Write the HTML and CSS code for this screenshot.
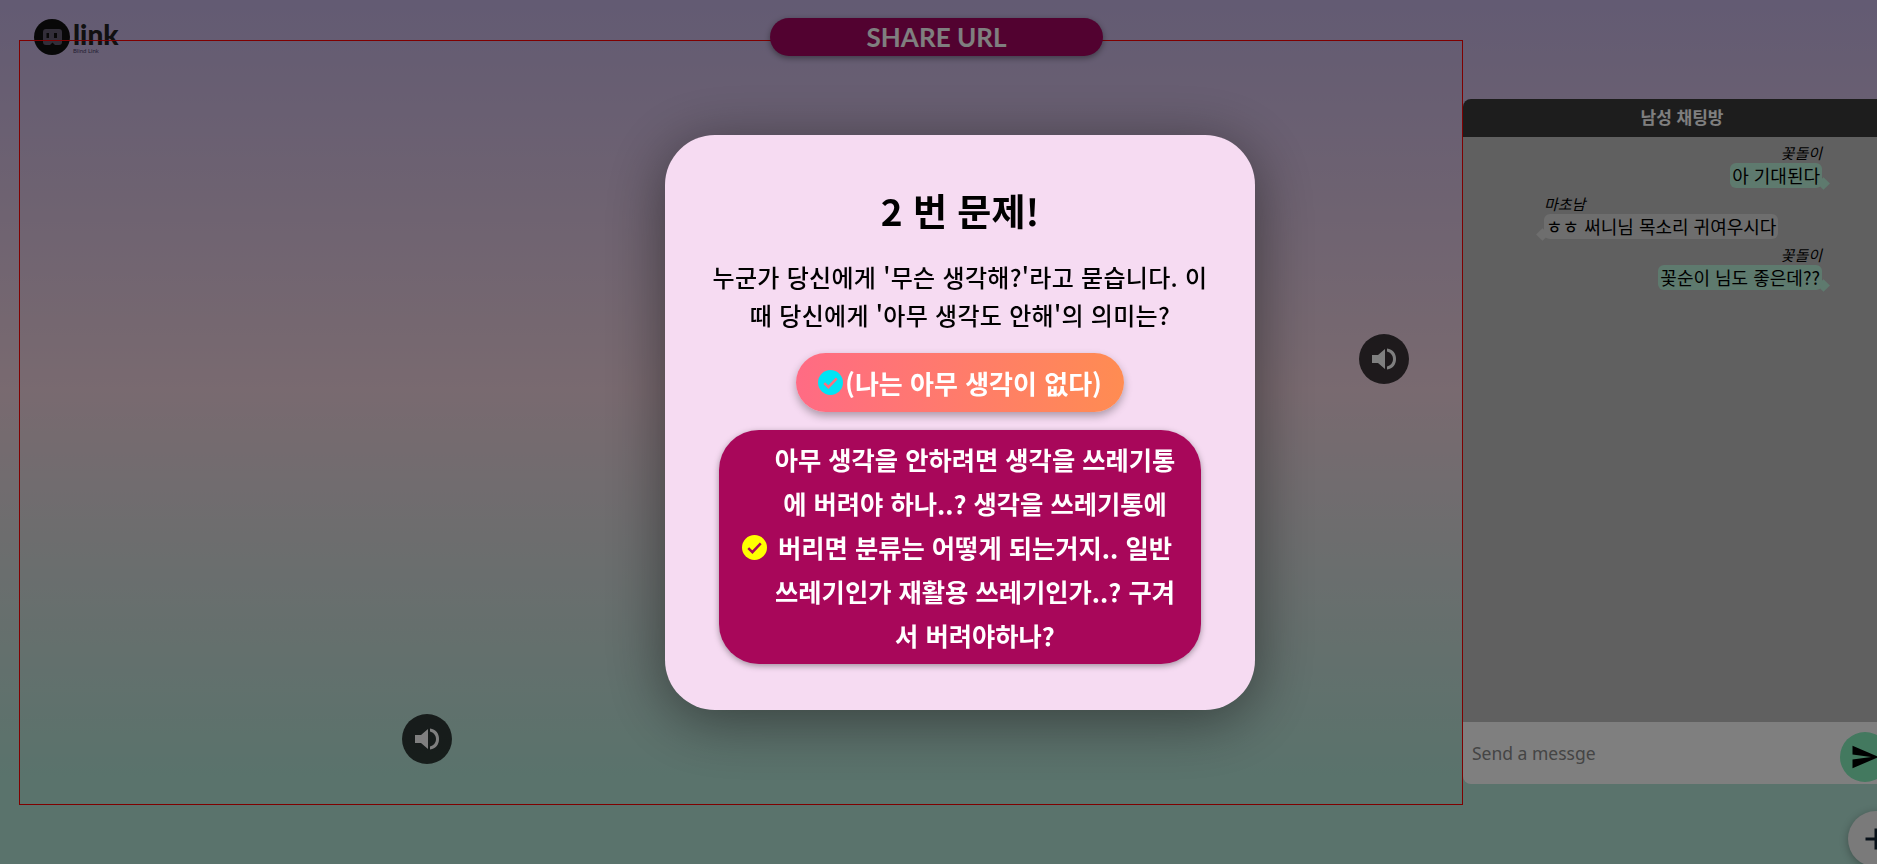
FILE: index.html
```html
<!DOCTYPE html>
<html lang="ko">
<head>
  <title>Blind Link</title>
  <meta charset="utf-8" />
  <link rel="stylesheet" href="styles.css">
</head>
<body>

<!--Logo-->
<div class="logo">
  <svg class="logo-mark" viewBox="0 0 36 36">
    <circle cx="18" cy="18" r="18" fill="#111"/>
    <path d="M12 10h13a3 3 0 0 1 3 3v10a3 3 0 0 1-3 3h-4l-2.500-2.500L16 26h-4a3 3 0 0 1-3-3V13a3 3 0 0 1 3-3z" fill="#645c73"/>
    <rect x="12.500" y="14" width="2.500" height="5" fill="#111"/>
    <rect x="20" y="14" width="3" height="5" fill="#111"/>
  </svg>
  <div class="logo-text">
    <span class="logo-name">link</span>
    <span class="logo-sub">Blind Link</span>
  </div>
</div>

<main class="stage">
  <!--Video area-->
  <section class="video">
    <div class="share-url">SHARE URL</div>
    <button class="speaker speaker-left">
      <svg viewBox="0 0 24 24"><path d="M0 8h6l7-6v20l-7-6H0z"/><path d="M15 1.500c6 1 9 5 9 10.500s-3 9.500-9 10.500v-3c3.500-1 6-3.500 6-7.500s-2.500-6.500-6-7.500z"/></svg>
    </button>
    <button class="speaker speaker-right">
      <svg viewBox="0 0 24 24"><path d="M0 8h6l7-6v20l-7-6H0z"/><path d="M15 1.500c6 1 9 5 9 10.500s-3 9.500-9 10.500v-3c3.500-1 6-3.500 6-7.500s-2.500-6.500-6-7.500z"/></svg>
    </button>
  </section>

  <!--Chat-->
  <aside class="chat">
    <header class="chat-head">남성 채팅방</header>
    <div class="chat-log">
      <div class="msg mine">
        <span class="who">꽃돌이</span>
        <span class="bubble">아 기대된다</span>
      </div>
      <div class="msg other">
        <span class="who">마초남</span>
        <span class="bubble">ㅎㅎ 써니님 목소리 귀여우시다</span>
      </div>
      <div class="msg mine">
        <span class="who">꽃돌이</span>
        <span class="bubble">꽃순이 님도 좋은데??</span>
      </div>
    </div>
    <form class="chat-input">
      <span class="hint">Send a messge</span>
      <button class="send" type="button">
        <svg viewBox="0 0 24 24"><path d="M2.010 21L23 12 2.010 3 2 10l15 2-15 2z"/></svg>
      </button>
    </form>
  </aside>
</main>

<button class="plus">
  <svg viewBox="0 0 24 24"><path d="M19 13h-6v6h-2v-6H5v-2h6V5h2v6h6z"/></svg>
</button>

<!--Quiz dialog-->
<div class="overlay">
  <div class="modal">
    <h1>2 번 문제!</h1>
    <p class="question">누군가 당신에게 '무슨 생각해?'라고 묻습니다. 이<br>때 당신에게 '아무 생각도 안해'의 의미는?</p>
    <div class="answer">
      <svg class="check" viewBox="0 0 24 24"><circle cx="12" cy="12" r="12" fill="#00e5f5"/><path d="M6 12.500l4 4 8-8.500" fill="none" stroke="#ff6f7d" stroke-width="2.400"/></svg>
      <span>(나는 아무 생각이 없다)</span>
    </div>
    <div class="answer-long">
      <svg class="check" viewBox="0 0 24 24"><circle cx="12" cy="12" r="12" fill="#ffff00"/><path d="M6 12.500l4 4 8-8.500" fill="none" stroke="#a8075a" stroke-width="2.400"/></svg>
      <p>아무 생각을 안하려면 생각을 쓰레기통<br>에 버려야 하나..? 생각을 쓰레기통에<br>버리면 분류는 어떻게 되는거지.. 일반<br>쓰레기인가 재활용 쓰레기인가..? 구겨<br>서 버려야하나?</p>
    </div>
  </div>
</div>

</body>
</html>
```

FILE: styles.css
```css
* {
  box-sizing: border-box;
}

html, body {
  height: 100%;
}

body {
  margin: 0;
  overflow: hidden;
  font-family: "Noto Sans CJK KR", "Noto Sans", sans-serif;
  background: linear-gradient(#c6b6e6 0%, #f2d4e0 45%, #b4e6d8 90%, #b4e6d8 100%);
}

button {
  border: 0;
  padding: 0;
  cursor: pointer;
}

h1, p {
  margin: 0;
}

.logo {
  position: absolute;
  top: 19px;
  left: 34px;
  display: flex;
  gap: 3px;
}
.logo-mark {
  width: 36px;
  height: 36px;
}
.logo-text {
  display: flex;
  flex-direction: column;
  font-family: "Lato", sans-serif;
  color: #222;
}
.logo-name {
  font-size: 28px;
  font-weight: 900;
  line-height: 27px;
  margin-top: 2px;
}
.logo-sub {
  font-size: 6px;
  line-height: 6px;
  color: #4a3f66;
}

.stage {
  display: flex;
  align-items: flex-start;
  height: 100%;
  padding: 40px 0 0 19px;
}

.video {
  position: relative;
  flex: none;
  width: 1444px;
  height: 765px;
  border: 1px solid #ff0000;
}

.share-url {
  position: absolute;
  top: -23px;
  left: 750px;
  width: 333px;
  height: 38px;
  border-radius: 19px;
  background: #a50460;
  color: #fff;
  font-family: "Lato", sans-serif;
  font-size: 26px;
  font-weight: 700;
  line-height: 38px;
  text-align: center;
  box-shadow: 0 2px 6px rgba(0,0,0,.4);
}

.speaker {
  position: absolute;
  width: 50px;
  height: 50px;
  border-radius: 50%;
  background: rgba(0,0,0,.75);
  display: flex;
  align-items: center;
  justify-content: center;
}
.speaker svg {
  width: 24px;
  height: 24px;
  fill: #fff;
}
.speaker-left {
  left: 382px;
  top: 673px;
}
.speaker-right {
  left: 1339px;
  top: 293px;
}

.chat {
  flex: none;
  width: 438px;
  margin-top: 59px;
  display: flex;
  flex-direction: column;
}
.chat-head {
  height: 38px;
  border-radius: 8px 8px 0 0;
  background: #3a3a3a;
  color: #fff;
  font-size: 17px;
  font-weight: 700;
  line-height: 36px;
  text-align: center;
}
.chat-log {
  height: 585px;
  background: #c0c0c0;
  padding: 6px 79px 0 81px;
  display: flex;
  flex-direction: column;
}
.msg {
  display: flex;
  flex-direction: column;
  margin-bottom: 6px;
}
.mine {
  align-items: flex-end;
}
.other {
  align-items: flex-start;
}
.who {
  font-size: 15px;
  font-style: italic;
  line-height: 20px;
  color: #000;
}
.bubble {
  position: relative;
  height: 25px;
  padding: 0 2px;
  border-radius: 6px;
  font-size: 18px;
  line-height: 25px;
  color: #000;
}
.bubble::after {
  content: "";
  position: absolute;
  bottom: 0;
  width: 9px;
  height: 9px;
  transform: rotate(45deg);
}
.mine .bubble {
  background: #bcf4dc;
}
.mine .bubble::after {
  right: -6px;
  background: #bcf4dc;
}
.other .bubble {
  background: #dcdcdc;
}
.other .bubble::after {
  left: -6px;
  background: #dcdcdc;
}

.chat-input {
  height: 62px;
  border-radius: 0 0 0 8px;
  background: #ffffff;
  padding: 0 11px 0 9px;
  display: flex;
  align-items: center;
  justify-content: space-between;
}
.hint {
  font-family: "Noto Sans", sans-serif;
  font-size: 17.500px;
  color: #8a8a8a;
  margin-top: -1px;
}
.send {
  width: 50px;
  height: 50px;
  margin-top: 8px;
  border-radius: 50%;
  background: #86f2be;
  display: flex;
  align-items: center;
  justify-content: center;
}
.send svg {
  width: 30px;
  height: 30px;
}

.plus {
  position: absolute;
  left: 1848px;
  top: 811px;
  width: 56px;
  height: 56px;
  border-radius: 50%;
  background: #f4f4f4;
  box-shadow: 0 2px 8px rgba(0,0,0,.3);
  display: flex;
  align-items: center;
  justify-content: center;
}
.plus svg {
  width: 36px;
  height: 36px;
  fill: #123;
}

.overlay {
  position: fixed;
  top: 0;
  right: 0;
  bottom: 0;
  left: 0;
  z-index: 5;
  background: rgba(0,0,0,.5);
  padding: 135px 0 0 665px;
}

.modal {
  width: 590px;
  height: 575px;
  padding: 47px 22px 0;
  border-radius: 50px;
  background: #f6dbf2;
  box-shadow: 0 10px 60px rgba(0,0,0,.45);
  display: flex;
  flex-direction: column;
  align-items: center;
}
.modal h1 {
  font-size: 37px;
  font-weight: 700;
  line-height: 56px;
  color: #000;
}
.question {
  margin-top: 20px;
  font-size: 24px;
  letter-spacing: .3px;
  font-weight: 500;
  line-height: 38px;
  text-align: center;
  white-space: nowrap;
  color: #000;
}
.check {
  flex: none;
  width: 25px;
  height: 25px;
}
.answer {
  margin-top: 19px;
  width: 328px;
  height: 59px;
  border-radius: 30px;
  background: linear-gradient(90deg, #ff6b84, #ff8c52);
  box-shadow: 0 4px 8px rgba(0,0,0,.3);
  display: flex;
  align-items: center;
  justify-content: center;
  gap: 2px;
  color: #fff;
  font-size: 26px;
  font-weight: 700;
}
.answer-long {
  margin-top: 18px;
  width: 482px;
  height: 234px;
  border-radius: 40px;
  background: #a8075a;
  box-shadow: 0 2px 6px rgba(0,0,0,.35);
  padding: 0 21px 0 23px;
  display: flex;
  align-items: center;
  gap: 3px;
  color: #fff;
}
.answer-long p {
  flex: 1;
  font-size: 25.300px;
  font-weight: 700;
  line-height: 44px;
  text-align: center;
  white-space: nowrap;
}
```
